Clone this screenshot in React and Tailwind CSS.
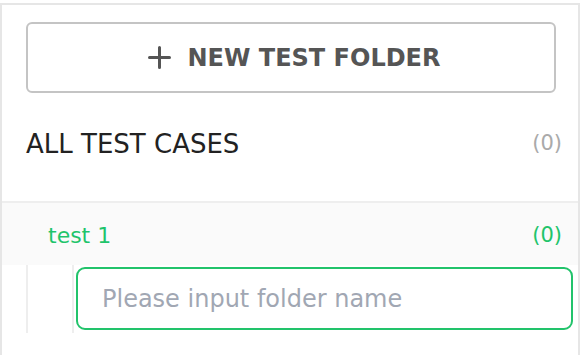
import React from "react";

const App = () => {
  return (
    <div className="w-[583px] h-[355px] bg-white pt-[3px] font-['DejaVu_Sans',sans-serif] overflow-hidden">
      <div className="w-[580px] h-[352px] border-t-2 border-l-2 border-r-2 border-[#e6e6e6]">
        <div className="px-[24px] pt-[17px]">
          <button className="w-[530px] h-[71px] rounded-[6px] border-2 border-[#c4c4c4] flex items-center justify-center gap-[17px] pl-[6px] text-[#555555]">
            <svg width="23" height="23" viewBox="0 0 23 23">
              <path d="M11.5 1.5v20M1.5 11.5h20" stroke="#555555" strokeWidth="3" strokeLinecap="round" />
            </svg>
            <span className="text-[24px] font-semibold">NEW TEST FOLDER</span>
          </button>
        </div>

        <div className="flex items-center justify-between h-[110px] pl-[24px] pr-[16px] pb-[6px] border-b-2 border-[#eeeeee]">
          <span className="text-[26px] text-[#222222]">ALL TEST CASES</span>
          <span className="text-[21px] text-[#aaaaaa]">(0)</span>
        </div>

        <div className="flex items-center justify-between h-[62px] bg-[#fafafa] pl-[46px] pr-[16px] pt-[3px]">
          <span className="text-[22px] text-[#1fc46b]">test 1</span>
          <span className="text-[21px] text-[#1fc46b]">(0)</span>
        </div>

        <div className="flex h-[68px] pl-[24px]">
          <div className="w-[48px] border-l-2 border-r-2 border-[#eeeeee]"></div>
          <div className="pl-[2px] pt-[2px]">
            <input
              className="w-[497px] h-[63px] rounded-[9px] border-2 border-[#22c36b] px-[24px] text-[24px] outline-none placeholder:text-[#a1a7b3]"
              placeholder="Please input folder name"
            />
          </div>
        </div>
      </div>
    </div>
  );
};

export default App;
